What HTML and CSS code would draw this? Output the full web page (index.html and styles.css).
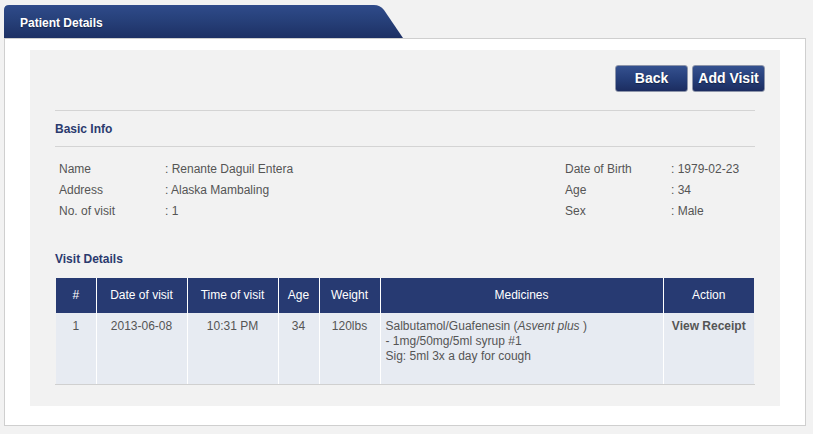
FILE: index.html
```html
<!DOCTYPE html>
<html>
<head>
<meta charset="utf-8">
<title>Patient Details</title>
<link rel="stylesheet" href="styles.css">
</head>
<body>
<div class="page">
  <div class="tab"><span class="tab-title">Patient Details</span></div>
  <div class="panel">
    <div class="inner">
      <div class="actions">
        <button class="btn btn-back">Back</button>
        <button class="btn btn-add">Add Visit</button>
      </div>
      <div class="section">
        <div class="rule rule-top"></div>
        <div class="heading">Basic Info</div>
        <div class="rule"></div>
        <div class="info">
          <div class="lbl">Name</div><div class="val">: Renante Daguil Entera</div>
          <div class="lbl">Date of Birth</div><div class="val">: 1979-02-23</div>
          <div class="lbl">Address</div><div class="val">: Alaska Mambaling</div>
          <div class="lbl">Age</div><div class="val">: 34</div>
          <div class="lbl">No. of visit</div><div class="val">: 1</div>
          <div class="lbl">Sex</div><div class="val">: Male</div>
        </div>
        <div class="heading heading-visit">Visit Details</div>
        <div class="table-wrap">
          <table class="vtable">
            <colgroup>
              <col class="c-num"><col class="c-date"><col class="c-time"><col class="c-age"><col class="c-weight"><col class="c-med"><col class="c-act">
            </colgroup>
            <thead>
              <tr>
                <th>#</th><th>Date of visit</th><th>Time of visit</th><th>Age</th><th>Weight</th><th>Medicines</th><th>Action</th>
              </tr>
            </thead>
            <tbody>
              <tr>
                <td>1</td>
                <td>2013-06-08</td>
                <td>10:31 PM</td>
                <td>34</td>
                <td>120lbs</td>
                <td class="med">Salbutamol/Guafenesin (<em>Asvent plus</em> )<br>- 1mg/50mg/5ml syrup #1<br>Sig: 5ml 3x a day for cough</td>
                <td class="act">View Receipt</td>
              </tr>
            </tbody>
          </table>
        </div>
      </div>
    </div>
  </div>
</div>
</body>
</html>
```
FILE: styles.css
```css
html, body {
  margin: 0;
  padding: 0;
  background: #f2f2f2;
  font-family: "Liberation Sans", Arial, sans-serif;
  font-size: 12px;
  color: #555;
}

.page {
  padding: 5px 7px 0 4px;
}

.tab {
  width: 399px;
  height: 33px;
  background: linear-gradient(to bottom, #2f4b8a 0%, #263f78 50%, #1d3064 100%);
  clip-path: path('M0 5 Q0 0 5 0 L370 0 Q376 0 380 5 L399 33 L0 33 Z');
  display: flex;
  align-items: center;
}

.tab-title {
  color: #fff;
  font-weight: bold;
  font-size: 12px;
  padding-left: 16px;
  padding-top: 2px;
  text-shadow: 0 1px 1px rgba(0, 0, 0, 0.35);
}

.panel {
  background: #fff;
  border: 1px solid #cfcfcf;
  padding: 11px 25px 19px 25px;
}

.inner {
  background: #f2f2f2;
  height: 356px;
  box-sizing: border-box;
  padding: 15px 15px 0 25px;
}

.actions {
  display: flex;
  justify-content: flex-end;
  gap: 4px;
}

.btn {
  height: 27px;
  box-sizing: border-box;
  border: 1px solid #8d95aa;
  border-radius: 3px;
  background: linear-gradient(to bottom, #35518f 0%, #263f7a 50%, #1c2d60 100%);
  color: #fff;
  font-family: "Liberation Sans", Arial, sans-serif;
  font-weight: bold;
  font-size: 14px;
  padding: 0;
  line-height: 25px;
  text-shadow: 0 1px 1px rgba(0, 0, 0, 0.4);
}

.btn-back { width: 73px; }
.btn-add { width: 73px; }

.section {
  margin-right: 10px;
}

.rule {
  height: 1px;
  background: #d4d4d4;
}

.rule-top {
  margin-top: 18px;
}

.heading {
  color: #2b3a6e;
  font-weight: bold;
  font-size: 12px;
  line-height: 15px;
  padding: 11px 0 9px 0;
}

.heading-visit {
  padding: 0;
  margin-top: 30px;
}

.info {
  display: grid;
  grid-template-columns: 106px 400px 106px auto;
  margin: 12px 0 0 4px;
  line-height: 21px;
  color: #555;
}

.table-wrap {
  margin-top: 11px;
  border-bottom: 1px solid #d0d0d0;
}

.vtable {
  width: 698px;
  margin-left: 1px;
  border-collapse: collapse;
  table-layout: fixed;
}

.c-num { width: 40px; }
.c-date { width: 91px; }
.c-time { width: 91px; }
.c-age { width: 41px; }
.c-weight { width: 61px; }
.c-med { width: 283px; }
.c-act { width: 91px; }

.vtable th {
  background: #273a72;
  color: #fff;
  font-weight: normal;
  font-size: 12px;
  line-height: 15px;
  padding: 10px 0;
  border-left: 1px solid #fff;
  text-align: center;
}

.vtable td {
  background: #e7ebf2;
  color: #555;
  line-height: 15px;
  padding: 6px 0 20px 0;
  border-left: 1px solid #fff;
  text-align: center;
  vertical-align: top;
}

.vtable th:first-child,
.vtable td:first-child {
  border-left: none;
}

.vtable td.med {
  text-align: left;
  padding-left: 5px;
}

.vtable td.act {
  font-weight: bold;
}
```
